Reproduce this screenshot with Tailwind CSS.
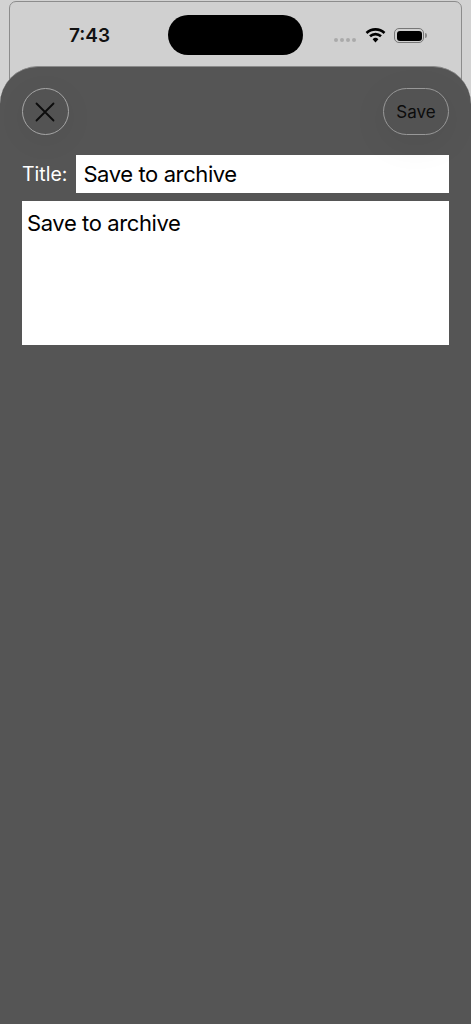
<!DOCTYPE html>
<html>
<head>
<meta charset="utf-8">
<script src="https://cdn.jsdelivr.net/npm/@tailwindcss/browser@4"></script>
</head>
<body class="m-0 bg-[#d2d2d2]">
<div class="relative h-[1024px] w-[471px] overflow-hidden bg-[#d2d2d2] font-['Inter',sans-serif]">
  <!-- background page behind the sheet -->
  <div class="mx-[9px] mt-[1px] h-[200px] rounded-[7px] border border-[#8c8c8c] bg-[#d0d0d0]">
    <div class="relative flex h-[66px] items-center">
      <span class="ml-[59px] mt-[1px] text-[19px] font-semibold leading-none text-[#111]">7:43</span>
      <div class="absolute left-[158px] top-[13px] h-[40px] w-[135px] rounded-[20px] bg-black"></div>
      <div class="absolute left-[324px] top-[36px] flex gap-[2px]">
        <span class="size-[4px] rounded-full bg-[#aaa]"></span>
        <span class="size-[4px] rounded-full bg-[#aaa]"></span>
        <span class="size-[4px] rounded-full bg-[#aaa]"></span>
        <span class="size-[4px] rounded-full bg-[#aaa]"></span>
      </div>
      <svg class="absolute left-[355px] top-[25px]" width="21" height="16" viewBox="0 0 21 16" fill="none">
        <path d="M1.5 6 A13 13 0 0 1 19.5 6" stroke="#000" stroke-width="2.6"/>
        <path d="M5 9.3 A8 8 0 0 1 16 9.3" stroke="#000" stroke-width="2.6"/>
        <path d="M7.6 12.2 A4.2 4.2 0 0 1 13.4 12.2 L10.5 15.6 Z" fill="#000"/>
      </svg>
      <div class="absolute left-[384px] top-[26px] flex items-center gap-[1px]">
        <div class="h-[15px] w-[30px] rounded-[5px] border border-[#777] p-[1.5px]">
          <div class="h-full w-full rounded-[3px] bg-black"></div>
        </div>
        <div class="h-[5px] w-[1.5px] rounded-r-sm bg-[#888]"></div>
      </div>
    </div>
  </div>

  <!-- sheet -->
  <div class="absolute inset-x-0 bottom-0 top-[66px] rounded-t-[38px] border-t border-[#8a8a8a] bg-[#555555] px-[22px] pt-[21px]">
    <div class="relative z-10 flex items-center justify-between">
      <button class="flex size-[47px] items-center justify-center rounded-full border border-[#a6a6a6] bg-[#535353] pr-[1px] shadow-[0_6px_30px_rgba(0,0,0,0.06)]">
        <svg width="20" height="20" viewBox="0 0 20 20" fill="none">
          <path d="M1.5 1.5 L18.5 18.5 M18.5 1.5 L1.5 18.5" stroke="#0c0c0c" stroke-width="1.8" stroke-linecap="round"/>
        </svg>
      </button>
      <button class="flex h-[47px] w-[66px] items-center justify-center rounded-[23.5px] border border-[#989898] bg-[#535353] pt-[2px] text-[17px] text-[#0c0c0c] shadow-[0_8px_36px_rgba(0,0,0,0.07)]">Save</button>
    </div>
    <div class="mt-[20px] flex items-center gap-[9px]">
      <label class="pt-[2px] text-[19.5px] leading-none text-white">Title:</label>
      <div class="flex h-[38px] flex-1 items-center bg-white px-[7px] text-[22px] tracking-[-0.4px] text-black">Save to archive</div>
    </div>
    <div class="mt-[8px] h-[144px] bg-white px-[5px] py-[6px] text-[22px] leading-[32px] tracking-[-0.4px] text-black">Save to archive</div>
  </div>
</div>
</body>
</html>
